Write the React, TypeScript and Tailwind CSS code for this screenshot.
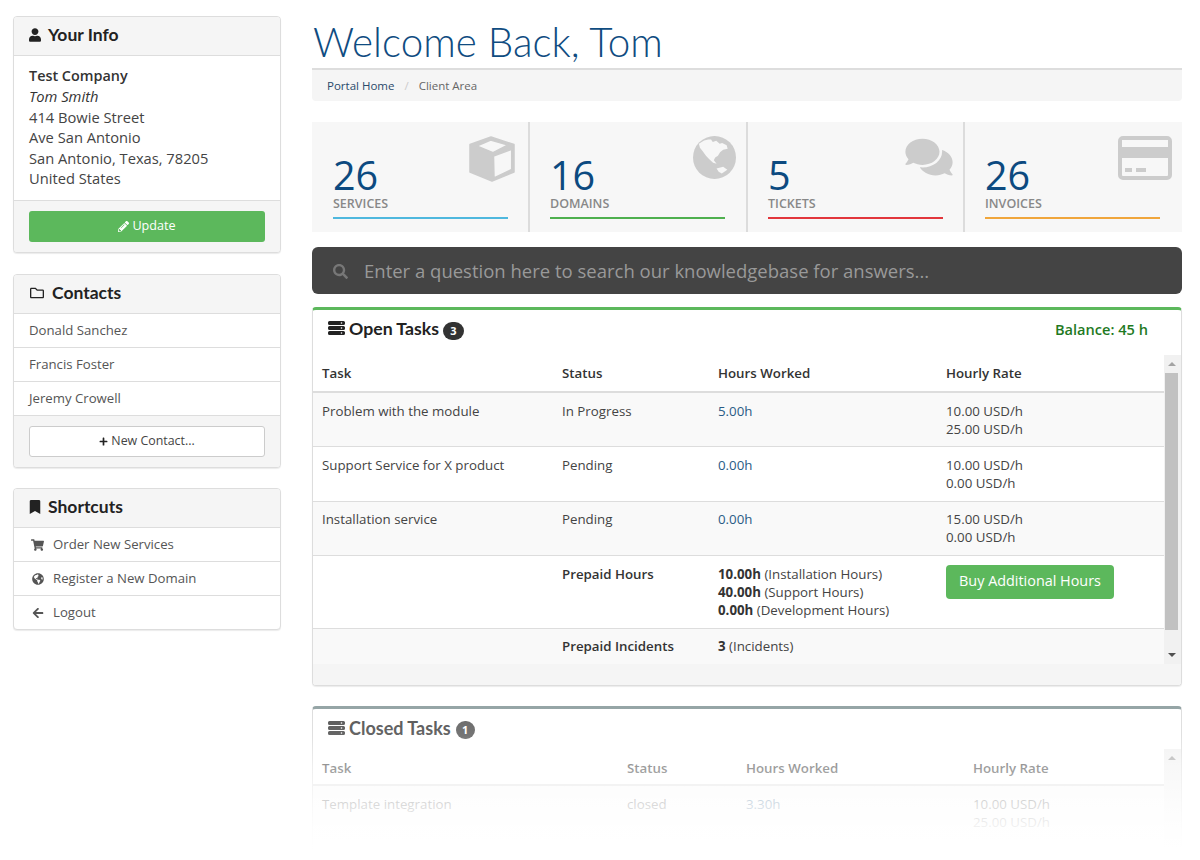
import React from "react";
import { FaUser, FaPencilAlt, FaRegFolder, FaPlus, FaBookmark, FaShoppingCart, FaGlobeAmericas, FaArrowLeft, FaSearch, FaComments } from "react-icons/fa";

const OS = "font-['Open_Sans',sans-serif]";
const HD = "font-['Lato',sans-serif]";

function ServerIcon({ className = "" }: { className?: string }) {
  return (
    <svg viewBox="0 0 17 14" className={className} fill="currentColor">
      <path fillRule="evenodd" d="M1.5 0h14a1.5 1.5 0 0 1 1.500 1.500v1A1.500 1.500 0 0 1 15.500 4h-14A1.500 1.500 0 0 1 0 2.500v-1A1.500 1.500 0 0 1 1.500 0ZM13.500 1.200a.8.8 0 1 0 0 1.600.8.8 0 0 0 0-1.600Zm-12 3.800h14A1.500 1.500 0 0 1 17 6.500v1A1.500 1.500 0 0 1 15.500 9h-14A1.500 1.500 0 0 1 0 7.500v-1A1.500 1.500 0 0 1 1.500 5Zm12 1.200a.8.8 0 1 0 0 1.600.8.8 0 0 0 0-1.600ZM1.500 10h14a1.500 1.500 0 0 1 1.500 1.500v1a1.500 1.500 0 0 1-1.500 1.500h-14A1.500 1.500 0 0 1 0 12.500v-1A1.500 1.500 0 0 1 1.500 10Zm12 1.200a.8.8 0 1 0 0 1.600.8.8 0 0 0 0-1.600Z" />
    </svg>
  );
}

function CardIcon() {
  return (
    <svg viewBox="0 0 54 44" className="w-[54px] h-[44px]">
      <path fill="#cccccc" fillRule="evenodd" d="M5 0h44a5 5 0 0 1 5 5v34a5 5 0 0 1-5 5H5a5 5 0 0 1-5-5V5a5 5 0 0 1 5-5Zm-1 4v7h46V4H4Zm0 18v17a1 1 0 0 0 1 1h44a1 1 0 0 0 1-1V22H4Zm3 10h7v4H7v-4Zm11 0h10v4H18v-4Z" />
    </svg>
  );
}

function CubeIcon() {
  return (
    <svg viewBox="0 0 46 46" className="w-[46px] h-[46px]">
      <path fill="#cccccc" stroke="#cccccc" strokeWidth="1.5" strokeLinejoin="round" fillRule="evenodd" d="M22 1 45 8.500V36L23 45 1 36V8.500ZM21.700 4 7.700 10 24 16.600 39 9ZM24.500 20 42.700 13.300V33.500L25 42Z" />
    </svg>
  );
}

function GlobeIcon() {
  return (
    <svg viewBox="28 28 124 124" className="w-[43px] h-[43px]">
      <circle cx="90" cy="90" r="62" fill="#cccccc" />
      <path fill="#f7f7f7" d="M45 50 60 41 72 38 80 38 85 45 95 42 105 50 112 48 125 55 128 65 115 68 106 75 100 85 92 90 88 98 96 108 86 105 75 95 66 86 56 72 48 62Z" />
      <path fill="#f7f7f7" d="M96 122 115 117 127 125 111 136 102 131Z" />
    </svg>
  );
}

function PanelHead({ icon, title }: { icon: React.ReactNode; title: string }) {
  return (
    <div className={`h-[39px] bg-[#f5f5f5] border-b border-[#ddd] flex items-center px-[15px] pb-[2px] gap-[7px] text-[#222] text-[17.5px] font-bold rounded-t-[3px] ${HD}`}>
      {icon}
      <span>{title}</span>
    </div>
  );
}

function Panel({ children }: { children: React.ReactNode }) {
  return <div className="border border-[#ddd] rounded-[4px] bg-white shadow-[0_1px_1px_rgba(0,0,0,0.08)]">{children}</div>;
}

function Row({ children, bottom = true }: { children: React.ReactNode; bottom?: boolean }) {
  return <div className={`flex items-center px-[15px] pt-px text-[13.2px] text-[#555] ${bottom ? "h-[34px] border-b border-[#ddd]" : "h-[33px]"}`}>{children}</div>;
}

function Stat({ num, label, bar, icon, w, pos, first }: { num: string; label: string; bar: string; icon: React.ReactNode; w: string; pos: string; first?: boolean }) {
  return (
    <div className={`relative h-full flex flex-col ${w} ${first ? "pl-[21px]" : "pl-[20px] border-l-2 border-[#dcdcdc]"}`}>
      <div className={`absolute top-[14px] flex justify-end text-[#ccc] ${pos}`}>{icon}</div>
      <div className="pt-[31px] text-[39.5px] leading-[44px] text-[#0c4a80]">{num}</div>
      <div className="text-[12.5px] leading-[14px] font-semibold text-[#888]">{label}</div>
      <div className={`mt-[6px] h-[2px] w-[175px] ${bar}`} />
    </div>
  );
}

function Scrollbar({ thumbTop, thumbH, height }: { thumbTop: number; thumbH: number; height: number }) {
  return (
    <div className="relative w-[17px] shrink-0 bg-[#f1f1f1]" style={{ height }}>
      <div className="absolute left-[4px] top-[7px] w-0 h-0 border-x-[4px] border-x-transparent border-b-[4px] border-b-[#a3a3a3]" />
      <div className="absolute left-[1px] w-[13px] bg-[#c1c1c1]" style={{ top: thumbTop, height: thumbH }} />
      <div className="absolute left-[4px] bottom-[7px] w-0 h-0 border-x-[4px] border-x-transparent border-t-[4px] border-t-[#505050]" />
    </div>
  );
}

function Th({ children, cls, pt = "pt-px" }: { children: React.ReactNode; cls: string; pt?: string }) {
  return <th className={`${cls} ${pt} px-[9px] text-left font-semibold border-b-2 border-[#ddd] align-middle`}>{children}</th>;
}

function Td({ children, h }: { children?: React.ReactNode; h?: string }) {
  return <td className={`px-[9px] pt-[8.5px] pb-[8.5px] align-top leading-[18.17px] ${h ?? ""}`}>{children}</td>;
}

function Rates({ a, b }: { a: string; b: string }) {
  return <>{a}<br />{b}</>;
}

export default function App() {
  return (
    <div className={`h-[860px] w-[1200px] overflow-hidden bg-white flex pl-[13px] pr-[18px] gap-[31px] ${OS}`}>
      <aside className="w-[268px] shrink-0 pt-[16px] flex flex-col">
        <Panel>
          <PanelHead icon={<FaUser className="w-[12px] h-[14px]" />} title="Your Info" />
          <div className="px-[15px] pt-[9.5px] pb-[11px] text-[14.7px] leading-[20.5px] text-[#444] h-[145px] border-b border-[#ddd]">
            <div className="font-semibold text-[#333] text-[14.4px]">Test Company</div>
            <div className="italic text-[#333]">Tom Smith</div>
            <div>414 Bowie Street</div>
            <div>Ave San Antonio</div>
            <div>San Antonio, Texas, 78205</div>
            <div>United States</div>
          </div>
          <div className="bg-[#f5f5f5] px-[15px] pt-[10px] pb-[10px] rounded-b-[3px]">
            <div className="h-[31px] rounded-[3px] bg-[#5cb85c] text-white text-[12.6px] flex items-center justify-center gap-[3px]">
              <FaPencilAlt className="w-[11px] h-[11px]" />Update
            </div>
          </div>
        </Panel>

        <div className="mt-[21px]">
          <Panel>
            <PanelHead icon={<FaRegFolder className="w-[16px] h-[14px]" />} title="Contacts" />
            <Row>Donald Sanchez</Row>
            <Row>Francis Foster</Row>
            <Row>Jeremy Crowell</Row>
            <div className="bg-[#f5f5f5] px-[15px] pt-[10px] pb-[10px] rounded-b-[3px]">
              <div className="h-[31px] rounded-[3px] bg-white border border-[#ccc] text-[#444] text-[12.4px] flex items-center justify-center gap-[3px]">
                <FaPlus className="w-[9px] h-[9px] text-[#222]" />New Contact...
              </div>
            </div>
          </Panel>
        </div>

        <div className="mt-[20px]">
          <Panel>
            <PanelHead icon={<FaBookmark className="w-[12px] h-[14px]" />} title="Shortcuts" />
            <Row><FaShoppingCart className="w-[13px] h-[12px] mr-[9px] ml-[2px] text-[#555]" />Order New Services</Row>
            <Row><FaGlobeAmericas className="w-[12px] h-[12px] mr-[9px] ml-[3px] text-[#555]" />Register a New Domain</Row>
            <Row bottom={false}><FaArrowLeft className="w-[12px] h-[12px] mr-[9px] ml-[3px] text-[#555]" />Logout</Row>
          </Panel>
        </div>
      </aside>

      <main className="w-[870px] shrink-0 pt-[16px]">
        <h1 className={`h-[52px] pl-px text-[40.4px] leading-[51px] font-light text-[#0f4c81] ${HD}`}>Welcome Back, Tom</h1>
        <div className="h-[33px] bg-[#f5f5f5] border-t-2 border-[#ddd] rounded-b-[4px] flex items-center px-[15px] text-[11.5px] text-[#666]">
          <span className="text-[#2a4a6b]">Portal Home</span>
          <span className="mx-[10px] text-[#ccc]">/</span>
          <span>Client Area</span>
        </div>

        <div className="mt-[21px] h-[110px] bg-[#f7f7f7] flex">
          <Stat w="w-[216px]" first pos="right-[13px]" num="26" label="SERVICES" bar="bg-[#4fb8de]" icon={<CubeIcon />} />
          <Stat w="w-[218px]" pos="right-[10px]" num="16" label="DOMAINS" bar="bg-[#4fb04f]" icon={<GlobeIcon />} />
          <Stat w="w-[217px]" pos="right-[8px]" num="5" label="TICKETS" bar="bg-[#e2363c]" icon={<FaComments className="w-[52px] h-[42px]" />} />
          <Stat w="w-[219px]" pos="right-[10px]" num="26" label="INVOICES" bar="bg-[#f0a63c]" icon={<CardIcon />} />
        </div>

        <div className="mt-[15px] h-[47px] rounded-[6px] bg-[#444] flex items-center pl-[21px] pt-px text-[18.5px] text-[#999]">
          <FaSearch className="w-[15px] h-[15px] text-[#777] mr-[16px]" />
          Enter a question here to search our knowledgebase for answers...
        </div>

        <section className="mt-[13px] h-[379px] border border-[#ddd] border-t-[3px] border-t-[#5cb85c] rounded-[4px] shadow-[0_1px_1px_rgba(0,0,0,0.08)] flex flex-col">
          <div className="h-[45px] flex items-start justify-between pl-[15px] pr-[33px] pt-[6px] shrink-0">
            <div className={`flex items-center text-[#222] text-[17.7px] font-bold ${HD}`}>
              <ServerIcon className="w-[17px] h-[14px] mr-[4px] mt-[-2px]" />
              <span>Open Tasks</span>
              <span className={`ml-[4px] mt-[3px] w-[21px] h-[18px] rounded-full bg-[#333] text-white text-[11px] font-bold flex items-center justify-center ${OS}`}>3</span>
            </div>
            <div className="text-[14.6px] font-semibold text-[#1f7a1f] mt-[3px]">Balance: 45 h</div>
          </div>
          <div className="flex h-[309px] overflow-hidden shrink-0">
            <div className="flex-1 overflow-hidden">
              <table className="w-full table-fixed border-collapse text-[13.3px] text-[#444]">
                <thead>
                  <tr className="text-[#333] h-[37px]">
                    <Th cls="w-[240px]">Task</Th>
                    <Th cls="w-[156px]">Status</Th>
                    <Th cls="w-[228px]">Hours Worked</Th>
                    <Th cls="">Hourly Rate</Th>
                  </tr>
                </thead>
                <tbody>
                  <tr className="bg-[#f9f9f9] border-b border-[#ddd]">
                    <Td>Problem with the module</Td><Td>In Progress</Td><Td><span className="text-[#2a5b85]">5.00h</span></Td><Td><Rates a="10.00 USD/h" b="25.00 USD/h" /></Td>
                  </tr>
                  <tr className="border-b border-[#ddd]">
                    <Td>Support Service for X product</Td><Td>Pending</Td><Td><span className="text-[#2a5b85]">0.00h</span></Td><Td><Rates a="10.00 USD/h" b="0.00 USD/h" /></Td>
                  </tr>
                  <tr className="bg-[#f9f9f9] border-b border-[#ddd]">
                    <Td>Installation service</Td><Td>Pending</Td><Td><span className="text-[#2a5b85]">0.00h</span></Td><Td><Rates a="15.00 USD/h" b="0.00 USD/h" /></Td>
                  </tr>
                  <tr className="border-b border-[#ddd]">
                    <Td />
                    <Td><b className="font-semibold text-[#333]">Prepaid Hours</b></Td>
                    <Td>
                      <b className="font-bold text-[#333]">10.00h</b> (Installation Hours)<br />
                      <b className="font-bold text-[#333]">40.00h</b> (Support Hours)<br />
                      <b className="font-bold text-[#333]">0.00h</b> (Development Hours)
                    </Td>
                    <Td>
                      <div className="w-[168px] h-[34px] rounded-[4px] bg-[#5cb85c] text-white text-[14.4px] flex items-center justify-center">Buy Additional Hours</div>
                    </Td>
                  </tr>
                  <tr className="bg-[#f9f9f9] h-[36px]">
                    <Td />
                    <Td><b className="font-semibold text-[#333]">Prepaid Incidents</b></Td>
                    <Td><b className="font-bold text-[#333]">3</b> (Incidents)</Td>
                    <Td />
                  </tr>
                </tbody>
              </table>
            </div>
            <Scrollbar thumbTop={18} thumbH={257} height={309} />
          </div>
          <div className="flex-1 bg-[#f5f5f5] rounded-b-[3px]" />
        </section>

        <section className="relative mt-[20px] h-[300px] border border-[#ddd] border-t-[3px] border-t-[#95a5a6] rounded-[4px]">
          <div className="h-[40px] flex items-start pl-[15px] pt-[6px]">
            <div className={`flex items-center text-[#555] text-[18px] font-bold ${HD}`}>
              <ServerIcon className="w-[17px] h-[14px] mr-[4px] mt-[-2px]" />
              <span>Closed Tasks</span>
              <span className={`ml-[5px] mt-[3px] w-[19px] h-[18px] rounded-full bg-[#666] text-white text-[11px] font-bold flex items-center justify-center ${OS}`}>1</span>
            </div>
          </div>
          <div className="flex h-[200px] overflow-hidden">
            <div className="flex-1 overflow-hidden">
              <table className="w-full table-fixed border-collapse text-[13.3px] text-[#444]">
                <thead>
                  <tr className="text-[#333] h-[36px]">
                    <Th pt="pt-[4px]" cls="w-[305px]">Task</Th>
                    <Th pt="pt-[4px]" cls="w-[119px]">Status</Th>
                    <Th pt="pt-[4px]" cls="w-[227px]">Hours Worked</Th>
                    <Th pt="pt-[4px]" cls="">Hourly Rate</Th>
                  </tr>
                </thead>
                <tbody>
                  <tr className="bg-[#f9f9f9]">
                    <Td>Template integration</Td><Td>closed</Td><Td><span className="text-[#2a5b85]">3.30h</span></Td><Td><Rates a="10.00 USD/h" b="25.00 USD/h" /></Td>
                  </tr>
                </tbody>
              </table>
            </div>
            <Scrollbar thumbTop={200} thumbH={0} height={200} />
          </div>
          <div className="absolute -inset-x-px top-[-3px] bottom-0 bg-[linear-gradient(to_bottom,rgba(255,255,255,0)_0%,rgba(255,255,255,0.1)_10%,rgba(255,255,255,0.5)_20%,rgba(255,255,255,0.8)_33%,rgba(255,255,255,0.92)_40%,rgba(255,255,255,1)_48%)]" />
        </section>
      </main>
    </div>
  );
}
